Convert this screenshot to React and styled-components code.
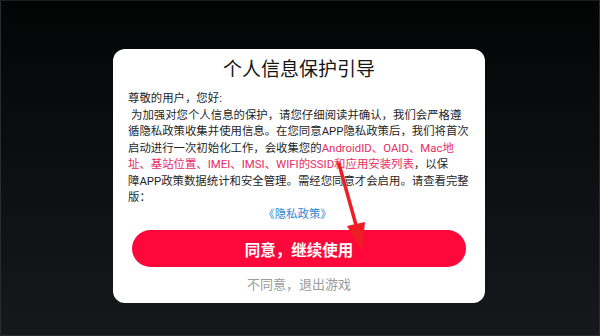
import React from "react";
import styled, { createGlobalStyle } from "styled-components";

const GlobalStyle = createGlobalStyle`
	html, body {
		margin: 0;
		padding: 0;
		background: #030505;
	}
	body {
		font-family: Roboto, "Noto Sans CJK SC", sans-serif;
	}
`;

/* Dialog for the privacy guide */
const App = () => {
	return (
		<Screen>
			<GlobalStyle />
			<Card>
				<Title>个人信息保护引导</Title>
				<Body>
					<Line>尊敬的用户，您好:</Line>
					<Line indent>为加强对您个人信息的保护，请您仔细阅读并确认，我们会严格遵</Line>
					<Line>循隐私政策收集并使用信息。在您同意APP隐私政策后，我们将首次</Line>
					<Line>
						启动进行一次初始化工作，会收集您的<Mark>AndroidID、OAID、Mac地</Mark>
					</Line>
					<Line>
						<Mark>址、基站位置、IMEI、IMSI、WIFI的SSID和应用安装列表</Mark>，以保
					</Line>
					<Line>障APP政策数据统计和安全管理。需经您同意才会启用。请查看完整</Line>
					<Line>版：</Line>
				</Body>
				<Policy>《隐私政策》</Policy>
				<Agree>同意，继续使用</Agree>
				<Decline>不同意，退出游戏</Decline>
				<Arrow width="50" height="110" viewBox="0 0 50 110">
					<line x1="11" y1="9" x2="28" y2="70" stroke="#ee1d26" strokeWidth="3.5" strokeLinecap="round" />
					<polygon points="19,71 37,67 34,96" fill="#ee1d26" />
				</Arrow>
			</Card>
		</Screen>
	);
};

const Screen = styled.div`
	box-sizing: border-box;
	width: 600px;
	height: 336px;
	padding-top: 48px;
	display: flex;
	justify-content: center;
	align-items: flex-start;
	background: linear-gradient(#030505, #16181c);
	border: 1px solid #2a2b2e;
	border-top-color: #1c1d1f;
`;

const Card = styled.div`
	position: relative;
	box-sizing: border-box;
	width: 372px;
	margin-left: -2px;
	padding: 8px 15px 8px;
	background: #ffffff;
	border-radius: 12px;
	display: flex;
	flex-direction: column;
	align-items: stretch;
`;

const Title = styled.div`
	font-size: 19px;
	line-height: 26px;
	color: #151515;
	text-align: center;
`;

const Body = styled.div`
	margin-top: 7px;
	font-size: 11.4px;
	line-height: 16.5px;
	color: #1f1f1f;
`;

const Line = styled.div`
	white-space: nowrap;
	padding-left: ${props => (props.indent ? "3px" : "0")};
`;

const Mark = styled.span`
	color: #e62d64;
`;

const Policy = styled.div`
	font-size: 11.4px;
	line-height: 16.5px;
	color: #2c86d1;
	text-align: center;
	margin-left: -3px;
`;

const Agree = styled.button`
	margin: 8px 4px 0;
	height: 37px;
	border: none;
	border-radius: 19px;
	background: #fe073a;
	color: #ffffff;
	font-family: inherit;
	font-size: 15.5px;
	font-weight: bold;
	padding: 0;
`;

const Decline = styled.div`
	margin-top: 7.5px;
	font-size: 13px;
	line-height: 20px;
	color: #9b9b9b;
	text-align: center;
`;

const Arrow = styled.svg`
	position: absolute;
	left: 215px;
	top: 106px;
`;

export default App;
